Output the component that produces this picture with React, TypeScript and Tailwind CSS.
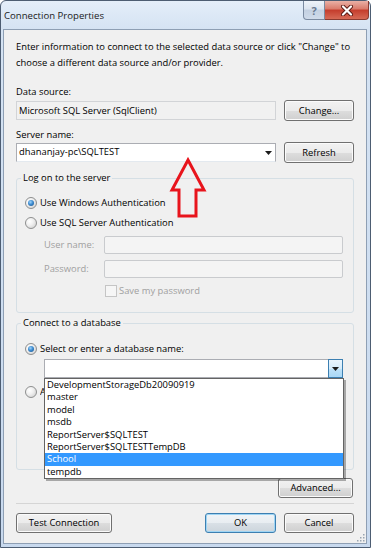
import React from "react";

const btnBase =
  "flex items-center justify-center rounded-[3px] border text-[9.4px] leading-none text-black";
const btnNormal =
  "border-[#707070] bg-[linear-gradient(#f2f2f2_0%,#ebebeb_50%,#dddddd_51%,#cfcfcf_100%)] shadow-[inset_0_0_0_1px_#fbfbfb]";
const btnDefault =
  "border-[#3c7fb1] bg-[linear-gradient(#f0f4f7_0%,#e8edf1_50%,#d9e0e6_51%,#ccd5dc_100%)] shadow-[inset_0_0_0_1px_#9fd5f4]";

function Btn({ children, w, def }: { children: React.ReactNode; w: string; def?: boolean }) {
  return <div className={`${btnBase} ${def ? btnDefault : btnNormal} ${w} h-full`}>{children}</div>;
}

function Radio({ checked }: { checked?: boolean }) {
  return (
    <div className="w-[12px] h-[12px] rounded-full border border-[#8e8f8f] bg-[radial-gradient(circle_at_35%_35%,#ffffff_0%,#f0f0f0_40%,#c9c9c9_100%)] flex items-center justify-center shrink-0">
      {checked && (
        <div className="w-[6px] h-[6px] rounded-full bg-[radial-gradient(circle_at_40%_35%,#9fd4fa_0%,#3d8bd0_45%,#174f86_100%)]" />
      )}
    </div>
  );
}

const items = [
  "DevelopmentStorageDb20090919",
  "master",
  "model",
  "msdb",
  "ReportServer$SQLTEST",
  "ReportServer$SQLTESTTempDB",
  "School",
  "tempdb",
];

export default function App() {
  return (
    <div className="w-[372px] h-[551px] bg-white overflow-hidden font-['Open_Sans','Noto_Sans',sans-serif] text-black">
      <div className="w-[371px] h-[548px] flex flex-col rounded-t-[6px] border border-[#4d5d72] bg-[linear-gradient(180deg,#e4eef9_0px,#d5e3f3_28px,#c8d9ee_100%)]">
        {/* Title bar */}
        <div className="h-[28px] flex items-start shrink-0">
          <div className="pl-[3px] pt-[7px] text-[9.6px] leading-[16px] text-[#1a1a1a]">Connection Properties</div>
          <div className="ml-auto mr-[1px] flex">
            <div className="w-[22px] h-[19px] border border-[#7a8aa0] border-t-0 rounded-bl-[4px] bg-[linear-gradient(#eef3f9_0%,#dbe4ef_45%,#c3d0e1_50%,#cfdbea_100%)] flex items-center justify-center text-[11px] font-bold leading-none text-[#6a7a90]">
              ?
            </div>
            <div className="w-[44px] h-[19px] border border-[#8a3a30] border-t-0 border-l-0 rounded-br-[4px] bg-[linear-gradient(#eab1a6_0%,#d97a6a_45%,#c43c2c_50%,#d66a56_100%)] flex items-center justify-center">
              <svg width="14" height="11" viewBox="0 0 14 11">
                <path d="M3 1.5 L11 9.5 M11 1.5 L3 9.5" stroke="#5a1a14" strokeWidth="4" strokeLinecap="round" />
                <path d="M3 1.5 L11 9.5 M11 1.5 L3 9.5" stroke="#ffffff" strokeWidth="2.2" strokeLinecap="round" />
              </svg>
            </div>
          </div>
        </div>

        {/* Client panel */}
        <div className="relative flex-1 ml-[2px] mr-[3px] mb-[3px] border border-[#8e9fb4] bg-[#f0f0f0] px-[12px] flex flex-col">
          <p className="mt-[9px] text-[9.4px] leading-[16px]">
            Enter information to connect to the selected data source or click "Change" to choose a different data source and/or provider.
          </p>

          <div className="mt-[14px] h-[14px] text-[9.4px] leading-[14px]">Data source:</div>
          <div className="mt-[1px] h-[21px] flex items-center gap-[7px]">
            <div className="w-[260px] h-[19px] border border-[#d2d4d7] bg-[#f1f1f1] pl-[2px] text-[9.4px] leading-[17px]">
              Microsoft SQL Server (SqlClient)
            </div>
            <div className="h-[21px] ml-auto">
              <Btn w="w-[70px]">Change...</Btn>
            </div>
          </div>

          <div className="mt-[7px] h-[14px] text-[9.4px] leading-[14px]">Server name:</div>
          <div className="h-[21px] flex items-center">
            <div className="w-[260px] h-[19px] border border-[#abadb3] border-b-[#e3e9ef] bg-white pl-[2px] flex items-center text-[9.4px]">
              <span>dhananjay-pc\SQLTEST</span>
              <svg className="ml-auto mr-[3px]" width="7" height="4" viewBox="0 0 7 4">
                <path d="M0 0 H7 L3.5 4 Z" fill="#1c1c1c" />
              </svg>
            </div>
            <div className="h-[21px] ml-auto">
              <Btn w="w-[70px]">Refresh</Btn>
            </div>
          </div>

          {/* Log on group */}
          <fieldset className="mt-[8px] w-[338px] border border-[#d5dfe5] rounded-[3px] pb-[14px]">
            <legend className="ml-[4px] px-[2px] text-[9.4px] leading-[14px]">Log on to the server</legend>
            <div className="pl-[8px]">
              <div className="mt-[10px] h-[16px] flex items-center gap-[3px] text-[9.4px]">
                <Radio checked />
                <span>Use Windows Authentication</span>
              </div>
              <div className="mt-[4px] h-[16px] flex items-center gap-[3px] text-[9.4px]">
                <Radio />
                <span>Use SQL Server Authentication</span>
              </div>
              <div className="mt-[5px] h-[18px] flex items-center pl-[19px] text-[9.4px] text-[#a0a0a0]">
                <span className="w-[60px]">User name:</span>
                <div className="w-[239px] h-[18px] border border-[#c9cbce] rounded-[2px] bg-[#f4f4f4]" />
              </div>
              <div className="mt-[6px] h-[18px] flex items-center pl-[19px] text-[9.4px] text-[#a0a0a0]">
                <span className="w-[60px]">Password:</span>
                <div className="w-[239px] h-[18px] border border-[#c9cbce] rounded-[2px] bg-[#f4f4f4]" />
              </div>
              <div className="mt-[6px] h-[14px] flex items-center pl-[80px] gap-[2px] text-[9.4px] text-[#a0a0a0]">
                <div className="w-[12px] h-[12px] border border-[#c5c5c5] bg-[#f6f6f6]" />
                <span>Save my password</span>
              </div>
            </div>
          </fieldset>

          {/* Connect to database group */}
          <fieldset className="mt-[3px] w-[338px] border border-[#d5dfe5] rounded-[3px] pb-[69px]">
            <legend className="ml-[4px] px-[2px] text-[9.4px] leading-[14px]">Connect to a database</legend>
            <div className="pl-[8px]">
              <div className="mt-[11px] h-[16px] flex items-center gap-[3px] text-[9.4px]">
                <Radio checked />
                <span>Select or enter a database name:</span>
              </div>
              <div className="relative z-10 mt-[2px] ml-[19px] w-[299px] h-[19px] border border-[#abadb3] bg-white">
                <div className="absolute right-[-1px] top-[-1px] w-[15px] h-[19px] border border-[#3c7fb1] bg-[linear-gradient(#eaf5fd_0%,#d6ecfb_50%,#bfe2f8_51%,#a9d7f5_100%)] flex items-center justify-center">
                  <svg width="7" height="4" viewBox="0 0 7 4">
                    <path d="M0 0 H7 L3.5 4 Z" fill="#1c1c1c" />
                  </svg>
                </div>
                <div className="absolute left-[-1px] top-[18px] w-[300px] h-[101px] border border-[#646464] bg-white shadow-[2px_2px_0_rgba(0,0,0,0.3)]">
                  {items.map((it) => (
                    <div
                      key={it}
                      className={`h-[12.4px] pl-[2px] text-[9.4px] leading-[12.4px] ${
                        it === "School" ? "bg-[#3399ff] text-white" : "text-black"
                      }`}
                    >
                      {it}
                    </div>
                  ))}
                </div>
              </div>
              <div className="mt-[6px] h-[16px] flex items-center gap-[3px] text-[9.4px]">
                <Radio />
                <span className="w-[5px] overflow-hidden whitespace-nowrap">A</span>
              </div>
            </div>
          </fieldset>

          <div className="mt-[8px] h-[20px] flex justify-end pr-[1px]">
            <Btn w="w-[75px]">Advanced...</Btn>
          </div>

          <div className="mt-[5px] h-[1px] bg-[#d5d5d5]" />

          <div className="mt-[9px] h-[20px] flex">
            <Btn w="w-[96px]">Test Connection</Btn>
            <div className="ml-auto flex gap-[8px] h-full">
              <Btn w="w-[71px]" def>
                OK
              </Btn>
              <Btn w="w-[70px]">Cancel</Btn>
            </div>
          </div>

          {/* Red annotation arrow */}
          <svg className="absolute left-[164px] top-[127px]" width="40" height="62" viewBox="0 0 40 62">
            <path
              d="M20 3 L36 33 L28 33 L28 59 L11 59 L11 33 L4 33 Z"
              fill="none"
              stroke="#e8141c"
              strokeWidth="3"
              strokeLinejoin="miter"
            />
          </svg>

          {/* Resize grip */}
          <svg className="absolute right-[1px] bottom-[1px]" width="10" height="10" viewBox="0 0 10 10">
            {[
              [8, 2],
              [8, 5],
              [5, 5],
              [8, 8],
              [5, 8],
              [2, 8],
            ].map(([x, y], i) => (
              <rect key={i} x={x} y={y} width="1.5" height="1.5" fill="#9aa5b1" />
            ))}
          </svg>
        </div>
      </div>
    </div>
  );
}
